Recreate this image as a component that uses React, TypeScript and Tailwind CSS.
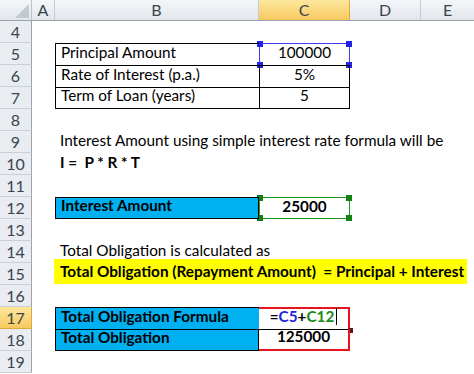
import React from "react";

const FONT = "font-['Lato','Noto_Sans',sans-serif]";

type Row = {
  n: number;
  b?: React.ReactNode;
  c?: React.ReactNode;
  bCls?: string;
  cCls?: string;
  hl?: boolean;
  overlay?: React.ReactNode;
};

function Handles({ color }: { color: string }) {
  return (
    <>
      <span className={`absolute -left-[3px] -top-[3px] w-[6px] h-[6px] ${color}`} />
      <span className={`absolute -right-[3px] -top-[3px] w-[6px] h-[6px] ${color}`} />
      <span className={`absolute -left-[3px] -bottom-[3px] w-[6px] h-[6px] ${color}`} />
      <span className={`absolute -right-[3px] -bottom-[3px] w-[6px] h-[6px] ${color}`} />
    </>
  );
}

const rows: Row[] = [
  { n: 4 },
  {
    n: 5,
    b: "Principal Amount",
    bCls: "border-l border-t border-black",
    c: "100000",
    cCls: "border-l border-t border-r border-black justify-center",
    overlay: (
      <div className="absolute -left-px -top-px -right-px -bottom-px border border-[#3b3bf5]">
        <Handles color="bg-[#2323e8]" />
      </div>
    ),
  },
  {
    n: 6,
    b: "Rate of Interest (p.a.)",
    bCls: "border-l border-t border-black",
    c: "5%",
    cCls: "border-l border-t border-r border-black justify-center",
  },
  {
    n: 7,
    b: "Term of Loan (years)",
    bCls: "border-l border-t border-b border-black",
    c: "5",
    cCls: "border-l border-t border-r border-b border-black justify-center",
  },
  { n: 8 },
  { n: 9, b: "Interest Amount using simple interest rate formula will be" },
  { n: 10, b: <span className="font-bold">I =&nbsp; P * R * T</span> },
  { n: 11 },
  {
    n: 12,
    b: <span className="font-bold">Interest Amount</span>,
    bCls: "border border-black bg-[#00b0f0]",
    c: <span className="font-bold">25000</span>,
    cCls: "justify-center",
    overlay: (
      <div className="absolute left-0 top-0 right-0 bottom-0 border border-[#1f9a1f]">
        <Handles color="bg-[#128012]" />
      </div>
    ),
  },
  { n: 13 },
  { n: 14, b: "Total Obligation is calculated as" },
  {
    n: 15,
    b: (
      <span className="font-bold bg-[#ffff00] -ml-[6px] pl-[6px] pr-[3px] py-[1px]">
        Total Obligation (Repayment Amount)&nbsp; = Principal + Interest
      </span>
    ),
  },
  { n: 16 },
  {
    n: 17,
    hl: true,
    b: <span className="font-bold">Total Obligation Formula</span>,
    bCls: "border-l border-t border-black bg-[#00b0f0]",
    c: (
      <span className="font-bold">
        =<span className="text-[#2222e0]">C5</span>+<span className="text-[#1a8a1a]">C12</span>
        <span className="inline-block w-px h-[17px] bg-black ml-[2px] -mb-[3px]" />
      </span>
    ),
    cCls: "justify-center border-l-2 border-t-2 border-r-2 border-[#e8141b] -ml-[2px] w-[93px] relative",
    overlay: (
      <>
        <div className="absolute left-0 right-0 -bottom-px h-px bg-black" />
        <span className="absolute -right-[5px] -bottom-[4px] w-[5px] h-[5px] bg-[#5a1a1a]" />
      </>
    ),
  },
  {
    n: 18,
    b: <span className="font-bold">Total Obligation</span>,
    bCls: "border border-black bg-[#00b0f0]",
    c: <span className="font-bold">125000</span>,
    cCls: "justify-center border-l-2 border-r-2 border-b-2 border-[#e8141b] -ml-[2px] w-[93px]",
  },
  { n: 19 },
];

export default function App() {
  return (
    <div className={`w-[474px] h-[374px] overflow-hidden bg-white text-[15.3px] text-black ${FONT}`}>
      {/* column header */}
      <div className="flex h-[21px] border-b border-[#9aa3ad] bg-gradient-to-b from-[#f4f6f9] to-[#e2e6eb] text-[16px] text-[#3a4450]">
        <div className="relative w-[32px] border-r border-[#b9c0c9]">
          <svg className="absolute right-[2px] bottom-[2px]" width="14" height="14" viewBox="0 0 14 14">
            <polygon points="14,0 14,14 0,14" fill="#c3c9d1" />
          </svg>
        </div>
        <div className="w-[23px] flex items-center justify-center border-r border-[#c6ccd3]">A</div>
        <div className="w-[204px] flex items-center justify-center border-r border-[#c6ccd3]">B</div>
        <div className="w-[91px] flex items-center justify-center border-r border-[#e0a93a] bg-gradient-to-b from-[#fde89e] to-[#f6c95c]">
          C
        </div>
        <div className="w-[71px] flex items-center justify-center border-r border-[#c6ccd3]">D</div>
        <div className="flex-1 flex items-center justify-center">E</div>
      </div>

      {rows.map((r) => (
        <div key={r.n} className="flex h-[22px]">
          <div
            className={`w-[32px] shrink-0 flex items-center justify-center border-r border-b text-[16px] text-[#3a4450] ${
              r.hl
                ? "bg-gradient-to-b from-[#fde89e] to-[#f6c95c] border-[#e0a93a]"
                : "bg-[#e9edf2] border-r-[#9aa3ad] border-b-[#c9cfd7]"
            }`}
          >
            {r.n}
          </div>
          <div className="w-[23px] shrink-0" />
          <div
            className={`w-[204px] shrink-0 flex items-end pl-[5px] pb-[1px] whitespace-nowrap overflow-visible z-10 ${r.bCls ?? ""}`}
          >
            {r.b}
          </div>
          <div className={`relative w-[91px] shrink-0 flex items-end pb-[1px] whitespace-nowrap ${r.cCls ?? ""}`}>
            {r.c}
            {r.overlay}
          </div>
          <div className="w-[71px] shrink-0" />
          <div className="flex-1" />
        </div>
      ))}
    </div>
  );
}
